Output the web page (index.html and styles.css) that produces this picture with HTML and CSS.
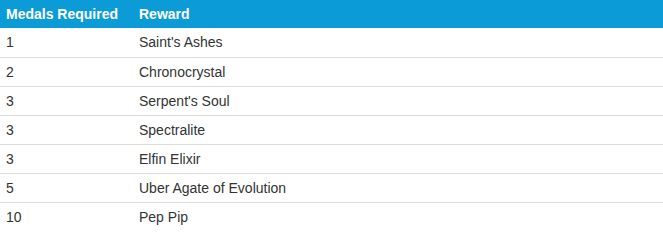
FILE: index.html
```html
<!DOCTYPE html>
<html>
<head>
<meta charset="utf-8">
<link rel="stylesheet" href="styles.css">
</head>
<body>
<table class="medals">
  <thead>
    <tr><th class="col-medals">Medals Required</th><th>Reward</th></tr>
  </thead>
  <tbody>
    <tr><td>1</td><td>Saint's Ashes</td></tr>
    <tr><td>2</td><td>Chronocrystal</td></tr>
    <tr><td>3</td><td>Serpent's Soul</td></tr>
    <tr><td>3</td><td>Spectralite</td></tr>
    <tr><td>3</td><td>Elfin Elixir</td></tr>
    <tr><td>5</td><td>Uber Agate of Evolution</td></tr>
    <tr><td>10</td><td>Pep Pip</td></tr>
  </tbody>
</table>
</body>
</html>
```
FILE: styles.css
```css
html, body {
  margin: 0;
  padding: 0;
  background: #ffffff;
}
.medals {
  width: 100%;
  border-collapse: collapse;
  font-family: "Liberation Sans", Arial, sans-serif;
  color: #333333;
}
.medals th {
  background: #0b9bd7;
  color: #ffffff;
  font-weight: bold;
  font-size: 14px;
  text-align: left;
  height: 28px;
  padding: 0 6px;
  box-sizing: border-box;
}
.medals .col-medals {
  width: 133px;
}
.medals td {
  font-size: 14px;
  height: 29px;
  padding: 0 6px;
  box-sizing: border-box;
  border-bottom: 1px solid #dcdcdc;
}
.medals tbody tr:last-child td {
  border-bottom: none;
}
```
